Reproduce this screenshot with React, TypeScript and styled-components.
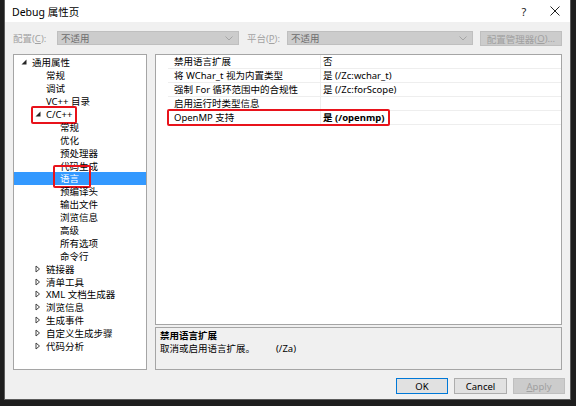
import React from "react";
import styled, { createGlobalStyle } from "styled-components";

const Global = createGlobalStyle`
  html, body { margin: 0; padding: 0; background: #1e1e1e; }
  body {
    width: 576px; height: 406px; overflow: hidden;
    font-family: "Noto Sans", "Noto Sans CJK SC", sans-serif;
    font-size: 9.5px; color: #000;
  }
`;

const Screen = styled.div`
  width: 576px;
  height: 406px;
  background: #1e1e1e;
  box-sizing: border-box;
  padding-left: 4px;
`;

const Dialog = styled.div`
  width: 567px;
  height: 400px;
  box-sizing: border-box;
  background: #f0f0f0;
  border: 1px solid #5c5c5c;
  border-top: none;
  display: flex;
  flex-direction: column;
`;

const TitleBar = styled.div`
  height: 22px;
  flex: none;
  background: #ffffff;
  display: flex;
  align-items: center;
  padding-left: 7px;
`;

const Title = styled.div`
  font-size: 10.5px;
  flex: 1;
`;

const TitleButton = styled.div<{ $w: number }>`
  width: ${(p) => p.$w}px;
  height: 22px;
  display: flex;
  align-items: center;
  justify-content: center;
  font-size: 11px;
  color: #222;
`;

const Body = styled.div`
  padding: 9px 8px 0 8px;
  display: flex;
  flex-direction: column;
`;

const Toolbar = styled.div`
  height: 14px;
  display: flex;
  align-items: center;
`;

const Label = styled.div<{ $w: number }>`
  width: ${(p) => p.$w}px;
  flex: none;
  color: #a3a3a3;
  white-space: nowrap;
  u { text-decoration: underline; }
`;

const Combo = styled.div<{ $w: number }>`
  width: ${(p) => p.$w}px;
  height: 14px;
  flex: none;
  box-sizing: border-box;
  background: #cccccc;
  border: 1px solid #bfbfbf;
  display: flex;
  align-items: center;
  padding: 0 5px 0 3px;
  color: #6d6d6d;
  span { flex: 1; }
`;

const Gap = styled.div<{ $w: number }>`
  width: ${(p) => p.$w}px;
  flex: none;
`;

const ToolButton = styled.div`
  width: 82px;
  height: 15px;
  box-sizing: border-box;
  background: #cccccc;
  border: 1px solid #bfbfbf;
  color: #a0a0a0;
  display: flex;
  align-items: center;
  justify-content: center;
  white-space: nowrap;
  margin-top: 1px;
`;

const Main = styled.div`
  margin-top: 9px;
  height: 316px;
  display: flex;
  gap: 8px;
`;

const TreePanel = styled.div`
  width: 134px;
  flex: none;
  box-sizing: border-box;
  background: #ffffff;
  border: 1px solid #a5a5a5;
  padding-top: 1px;
  position: relative;
`;

const TreeRow = styled.div<{ $level: number; $selected?: boolean }>`
  position: relative;
  height: 12.9px;
  display: flex;
  align-items: center;
  padding-left: ${(p) => 4 + p.$level * 14}px;
  background: ${(p) => (p.$selected ? "#3399ff" : "transparent")};
  color: ${(p) => (p.$selected ? "#ffffff" : "#000")};
  white-space: nowrap;
`;

const ArrowSlot = styled.div`
  width: 14px;
  height: 13px;
  flex: none;
  display: flex;
  align-items: center;
  padding-left: 3px;
  box-sizing: border-box;
`;

const Mark = styled.div<{ $l: number; $t: number; $w: number; $h: number }>`
  position: absolute;
  left: ${(p) => p.$l}px;
  top: ${(p) => p.$t}px;
  width: ${(p) => p.$w}px;
  height: ${(p) => p.$h}px;
  box-sizing: border-box;
  border: 2px solid #e8131b;
  border-radius: 2px;
  pointer-events: none;
`;

const RightCol = styled.div`
  flex: 1;
  display: flex;
  flex-direction: column;
  gap: 2px;
`;

const GridPanel = styled.div`
  height: 271px;
  box-sizing: border-box;
  background: #ffffff;
  border: 1px solid #a5a5a5;
`;

const GridRow = styled.div`
  position: relative;
  height: 14px;
  display: flex;
`;

const Gutter = styled.div`
  width: 12px;
  flex: none;
`;

const NameCell = styled.div`
  width: 153px;
  flex: none;
  box-sizing: border-box;
  padding-left: 6px;
  border-bottom: 1px solid #eeeeee;
  border-right: 1px solid #eeeeee;
  line-height: 13px;
  white-space: nowrap;
  overflow: hidden;
`;

const ValueCell = styled.div<{ $bold?: boolean }>`
  flex: 1;
  padding-left: 2px;
  border-bottom: 1px solid #eeeeee;
  line-height: 13px;
  white-space: nowrap;
  font-weight: ${(p) => (p.$bold ? 700 : 400)};
`;

const DescPanel = styled.div`
  flex: 1;
  box-sizing: border-box;
  border: 1px solid #a5a5a5;
  background: #f0f0f0;
  padding: 1px 4px;
  line-height: 13px;
`;

const DescTitle = styled.div`
  font-weight: 700;
`;

const DescFlag = styled.span`
  margin-left: 21px;
`;

const ButtonRow = styled.div`
  display: flex;
  justify-content: flex-end;
  gap: 6px;
  padding: 8px 5px 0 0;
`;

const DlgButton = styled.div<{ $w: number; $kind?: "default" | "normal" | "disabled" }>`
  width: ${(p) => p.$w}px;
  height: 16px;
  box-sizing: border-box;
  display: flex;
  align-items: center;
  justify-content: center;
  font-family: "Noto Sans", sans-serif;
  font-size: 9.5px;
  background: ${(p) => (p.$kind === "disabled" ? "#cccccc" : "#e1e1e1")};
  border: 1px solid
    ${(p) => (p.$kind === "default" ? "#0078d7" : p.$kind === "disabled" ? "#bfbfbf" : "#adadad")};
  color: ${(p) => (p.$kind === "disabled" ? "#a0a0a0" : "#000")};
  u { text-decoration: underline; }
`;

type Node = {
  label: string;
  level: number;
  arrow?: "open" | "closed";
  selected?: boolean;
  mark?: { l: number; t: number; w: number; h: number };
};

const tree: Node[] = [
  { label: "通用属性", level: 0, arrow: "open" },
  { label: "常规", level: 1 },
  { label: "调试", level: 1 },
  { label: "VC++ 目录", level: 1 },
  { label: "C/C++", level: 1, arrow: "open", mark: { l: 17, t: -2, w: 46, h: 18 } },
  { label: "常规", level: 2 },
  { label: "优化", level: 2 },
  { label: "预处理器", level: 2 },
  { label: "代码生成", level: 2 },
  { label: "语言", level: 2, selected: true, mark: { l: 39, t: -7, w: 38, h: 23 } },
  { label: "预编译头", level: 2 },
  { label: "输出文件", level: 2 },
  { label: "浏览信息", level: 2 },
  { label: "高级", level: 2 },
  { label: "所有选项", level: 2 },
  { label: "命令行", level: 2 },
  { label: "链接器", level: 1, arrow: "closed" },
  { label: "清单工具", level: 1, arrow: "closed" },
  { label: "XML 文档生成器", level: 1, arrow: "closed" },
  { label: "浏览信息", level: 1, arrow: "closed" },
  { label: "生成事件", level: 1, arrow: "closed" },
  { label: "自定义生成步骤", level: 1, arrow: "closed" },
  { label: "代码分析", level: 1, arrow: "closed" },
];

const props: { name: string; value: string; bold?: boolean; mark?: boolean }[] = [
  { name: "禁用语言扩展", value: "否" },
  { name: "将 WChar_t 视为内置类型", value: "是 (/Zc:wchar_t)" },
  { name: "强制 For 循环范围中的合规性", value: "是 (/Zc:forScope)" },
  { name: "启用运行时类型信息", value: "" },
  { name: "OpenMP 支持", value: "是 (/openmp)", bold: true, mark: true },
];

const OpenArrow = () => (
  <svg width="6" height="6" viewBox="0 0 6 6">
    <path d="M5.5 0.5 L5.5 5.5 L0.5 5.5 Z" fill="#262626" />
  </svg>
);

const ClosedArrow = () => (
  <svg width="6" height="8" viewBox="0 0 6 8">
    <path d="M1 1 L4.5 4 L1 7 Z" fill="none" stroke="#404040" strokeWidth="1" />
  </svg>
);

const Chevron = () => (
  <svg width="8" height="5" viewBox="0 0 8 5">
    <path d="M0.5 0.5 L4 4 L7.5 0.5" fill="none" stroke="#a5a5a5" strokeWidth="1" />
  </svg>
);

const CloseIcon = () => (
  <svg width="10" height="10" viewBox="0 0 10 10">
    <path d="M0.5 0.5 L9.5 9.5 M9.5 0.5 L0.5 9.5" stroke="#222" strokeWidth="1" />
  </svg>
);

export default function App() {
  return (
    <Screen>
      <Global />
      <Dialog>
        <TitleBar>
          <Title>Debug 属性页</Title>
          <TitleButton $w={32}>?</TitleButton>
          <TitleButton $w={30}>
            <CloseIcon />
          </TitleButton>
        </TitleBar>
        <Body>
          <Toolbar>
            <Label $w={44}>
              配置(<u>C</u>):
            </Label>
            <Combo $w={182}>
              <span>不适用</span>
              <Chevron />
            </Combo>
            <Gap $w={8} />
            <Label $w={40}>
              平台(<u>P</u>):
            </Label>
            <Combo $w={186}>
              <span>不适用</span>
              <Chevron />
            </Combo>
            <Gap $w={7} />
            <ToolButton>
              配置管理器(<u>O</u>)...
            </ToolButton>
          </Toolbar>
          <Main>
            <TreePanel>
              {tree.map((n, i) => (
                <TreeRow key={i} $level={n.level} $selected={n.selected}>
                  <ArrowSlot>
                    {n.arrow === "open" && <OpenArrow />}
                    {n.arrow === "closed" && <ClosedArrow />}
                  </ArrowSlot>
                  {n.label}
                  {n.mark && <Mark $l={n.mark.l} $t={n.mark.t} $w={n.mark.w} $h={n.mark.h} />}
                </TreeRow>
              ))}
            </TreePanel>
            <RightCol>
              <GridPanel>
                {props.map((p, i) => (
                  <GridRow key={i}>
                    <Gutter />
                    <NameCell>{p.name}</NameCell>
                    <ValueCell $bold={p.bold}>{p.value}</ValueCell>
                    {p.mark && <Mark $l={11} $t={-2} $w={223} $h={17} />}
                  </GridRow>
                ))}
              </GridPanel>
              <DescPanel>
                <DescTitle>禁用语言扩展</DescTitle>
                <div>
                  取消或启用语言扩展。<DescFlag>(/Za)</DescFlag>
                </div>
              </DescPanel>
            </RightCol>
          </Main>
        </Body>
        <ButtonRow>
          <DlgButton $w={52} $kind="default">OK</DlgButton>
          <DlgButton $w={53}>Cancel</DlgButton>
          <DlgButton $w={52} $kind="disabled">
            <u>A</u>pply
          </DlgButton>
        </ButtonRow>
      </Dialog>
    </Screen>
  );
}
